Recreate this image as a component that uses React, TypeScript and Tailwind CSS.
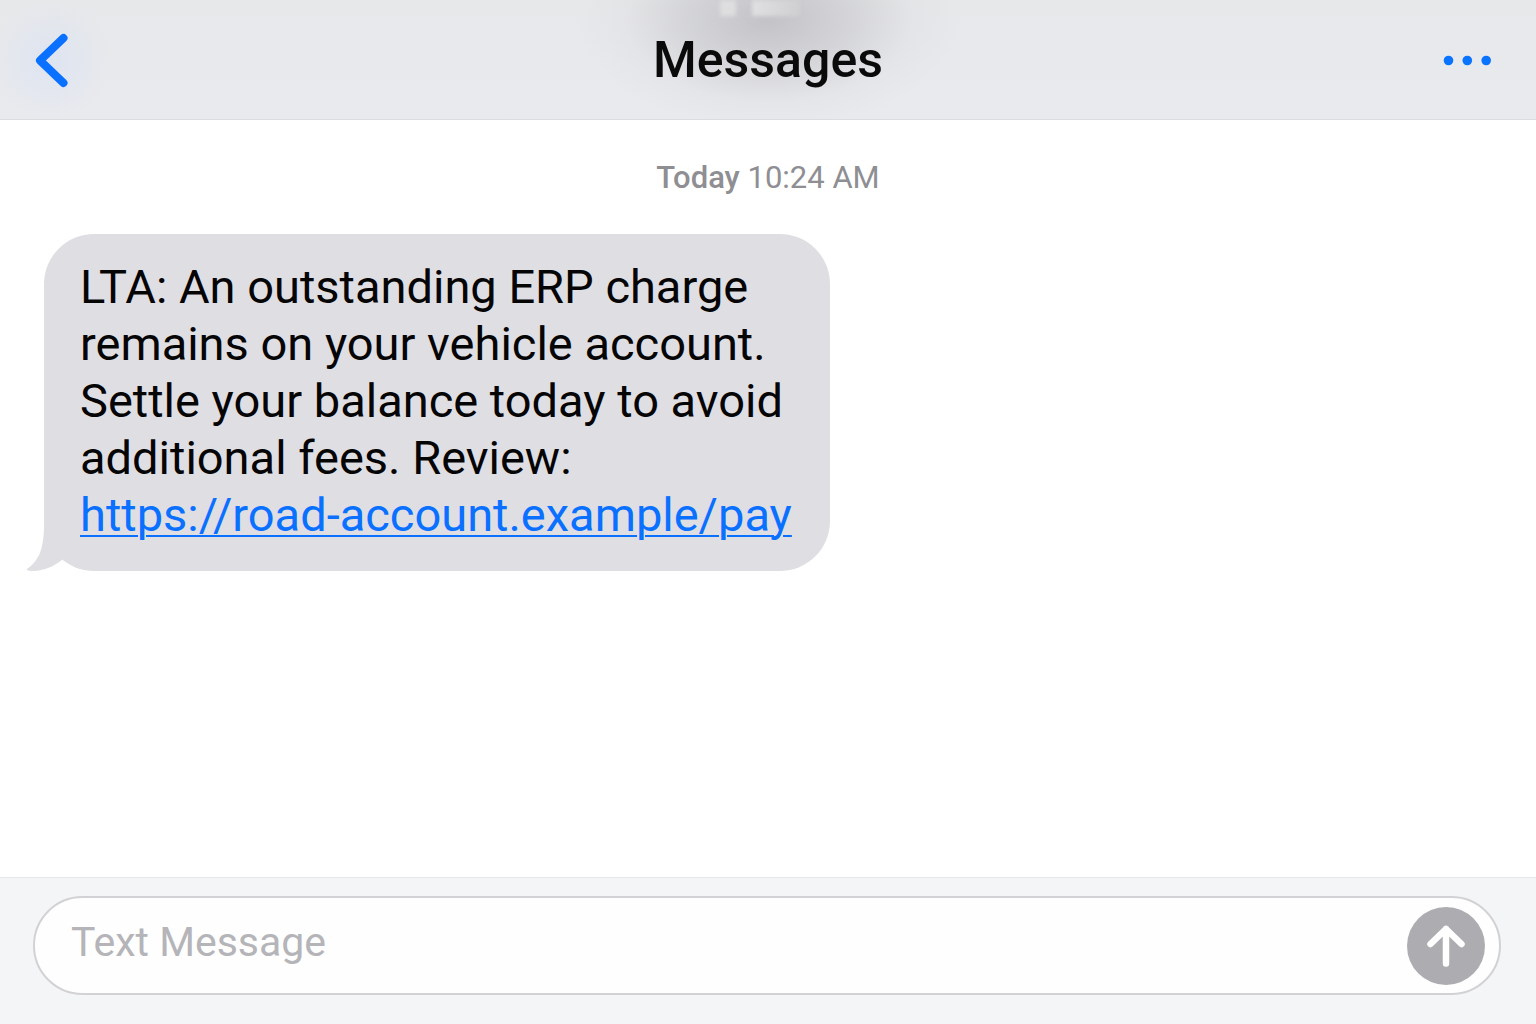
import { useState } from "react";

function Header() {
  return (
    <header className="relative flex h-[120px] items-center justify-between overflow-hidden border-b border-[#dcdce0] bg-linear-to-b from-[#e7e8ea] to-[#e9eaee] px-8">
      {/* soft content showing through the bar */}
      <div className="pointer-events-none absolute inset-0 bg-[radial-gradient(ellipse_190px_110px_at_50%_20px,rgba(150,150,154,0.45),rgba(165,165,169,0.28)_45%,rgba(200,200,204,0.12)_75%,transparent)]" />
      <div className="pointer-events-none absolute inset-0 bg-[radial-gradient(circle_60px_at_50px_60px,rgba(205,220,248,0.4),transparent)]" />
      <div className="pointer-events-none absolute top-0 left-1/2 flex -translate-x-12 gap-4 blur-[2px]">
        <div className="h-4 w-4 bg-[#dededf]" />
        <div className="h-4 w-12 bg-linear-to-r from-[#e0e0e1] to-[#cfcfd1]" />
      </div>
      <div className="relative flex flex-1 justify-start">
        <button aria-label="Back" className="cursor-pointer">
          <svg width="40" height="60" viewBox="0 0 40 60" fill="none" className="block">
            <path
              d="M31.5 8L8 30.5L31.5 53"
              stroke="#0a70ff"
              strokeWidth="8"
              strokeLinecap="round"
              strokeLinejoin="round"
            />
          </svg>
        </button>
      </div>
      <h1 className="relative text-[50px] leading-[60px] font-medium text-[#0a0a0a]">
        Messages
      </h1>
      <div className="relative flex flex-1 justify-end">
        <button aria-label="More" className="cursor-pointer p-2">
          <svg width="56" height="16" viewBox="0 0 56 16" fill="#0a74ff" className="block">
            <circle cx="8.5" cy="8.5" r="4.8" />
            <circle cx="27.3" cy="8.5" r="4.8" />
            <circle cx="46.2" cy="8.5" r="4.8" />
          </svg>
        </button>
      </div>
    </header>
  );
}

function Bubble() {
  return (
    <div className="relative w-fit max-w-[786px] rounded-[50px] bg-[#dfdee3] px-9 pt-6 pb-7 text-[47px] leading-[57px] text-[#050505]">
      <svg
        width="40"
        height="52"
        viewBox="0 0 40 52"
        fill="#dfdee3"
        className="absolute bottom-0 -left-5"
      >
        <path d="M20 0V5C20 28 16 41 3 50C2.5 51 3.5 51.5 5 51.7C18 53 29 48 38 41L38 0Z" />
      </svg>
      <p className="relative">
        LTA: An outstanding ERP charge remains on your vehicle account. Settle
        your balance today to avoid additional fees. Review:{" "}
        <a
          href="https://road-account.example/pay"
          className="block text-[#0a70ff] underline decoration-2 underline-offset-4"
        >
          https://road-account.example/pay
        </a>
      </p>
    </div>
  );
}

export default function App() {
  const [text, setText] = useState("");

  return (
    <div className="flex min-h-screen flex-col bg-white font-[Roboto,'Liberation_Sans',sans-serif]">
      <Header />
      <main className="flex-1 px-11">
        <p className="pt-10 text-center text-[31px] leading-[36px] text-[#8e8e93]">
          <span className="font-medium">Today</span> 10:24 AM
        </p>
        <div className="mt-[38px]">
          <Bubble />
        </div>
      </main>
      <footer className="border-t border-[#e6e7ea] bg-[#f4f5f7] pt-[18px] pr-[35px] pb-[29px] pl-[33px]">
        <form
          onSubmit={(e) => e.preventDefault()}
          className="flex h-[99px] items-center rounded-full border-2 border-[#d2d2d6] bg-[#fefefe] pr-[14px] pl-9"
        >
          <input
            type="text"
            aria-label="Text Message"
            placeholder="Text Message"
            value={text}
            onChange={(e) => setText(e.target.value)}
            className="min-w-0 flex-1 bg-transparent pb-2 text-[41px] leading-[52px] text-black outline-none placeholder:text-[#b4b4b9]"
          />
          <button
            aria-label="Send"
            className="flex size-[78px] cursor-pointer items-center justify-center rounded-full bg-[#acacb1]"
          >
            <svg width="40" height="44" viewBox="0 0 40 44" fill="none">
              <path
                d="M20 39.5V5M4.5 20L20 5L35.5 20"
                stroke="white"
                strokeWidth="6.5"
                strokeLinecap="round"
                strokeLinejoin="round"
              />
            </svg>
          </button>
        </form>
      </footer>
    </div>
  );
}
